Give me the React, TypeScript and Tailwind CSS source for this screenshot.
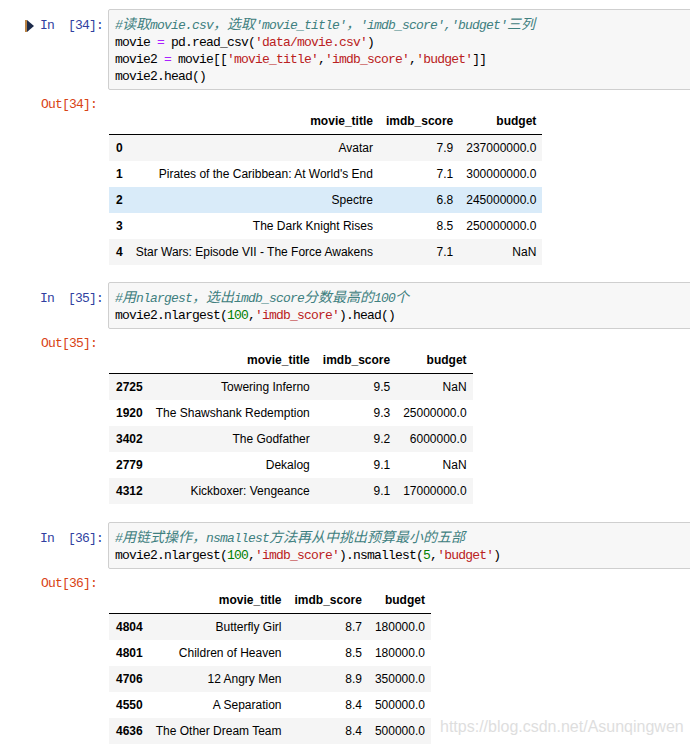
import React from "react";

type Row = [string, string, string, string];

const T1: Row[] = [
    ["0", "Avatar", "7.9", "237000000.0"],
    ["1", "Pirates of the Caribbean: At World's End", "7.1", "300000000.0"],
    ["2", "Spectre", "6.8", "245000000.0"],
    ["3", "The Dark Knight Rises", "8.5", "250000000.0"],
    ["4", "Star Wars: Episode VII - The Force Awakens", "7.1", "NaN"],
];

const T2: Row[] = [
    ["2725", "Towering Inferno", "9.5", "NaN"],
    ["1920", "The Shawshank Redemption", "9.3", "25000000.0"],
    ["3402", "The Godfather", "9.2", "6000000.0"],
    ["2779", "Dekalog", "9.1", "NaN"],
    ["4312", "Kickboxer: Vengeance", "9.1", "17000000.0"],
];

const T3: Row[] = [
    ["4804", "Butterfly Girl", "8.7", "180000.0"],
    ["4801", "Children of Heaven", "8.5", "180000.0"],
    ["4706", "12 Angry Men", "8.9", "350000.0"],
    ["4550", "A Separation", "8.4", "500000.0"],
    ["4636", "The Other Dream Team", "8.4", "500000.0"],
];

// full-width glyphs get their own size so they take two mono cells
function Cjk({ children }: { children: React.ReactNode }) {
    return <span className="text-[14px] tracking-normal">{children}</span>;
}

const S = ({ children }: { children: React.ReactNode }) => <span className="text-[#ba2121]">{children}</span>;
const N = ({ children }: { children: React.ReactNode }) => <span className="text-[#008000]">{children}</span>;
const Op = ({ children }: { children: React.ReactNode }) => <span className="text-[#aa22ff]">{children}</span>;

function Comment({ children }: { children: React.ReactNode }) {
    return <div className="italic text-[#408080]">{children}</div>;
}

function RunMarker() {
    return (
        <svg width="10" height="12" viewBox="0 0 10 12" className="mr-[5px] shrink-0">
            <rect x="0" y="0" width="2" height="12" fill="#b98244" />
            <path d="M2 0 L9 6 L2 12 Z" fill="#1d2b4a" />
        </svg>
    );
}

function InputCell({ n, marker, children }: { n: number; marker?: boolean; children: React.ReactNode }) {
    return (
        <div className="flex">
            <div className={`w-[108px] shrink-0 flex items-center h-[17px] mt-[8px] ${marker ? "pl-[25px]" : "pl-[40px]"}`}>
                {marker && <RunMarker />}
                <span className="whitespace-pre text-[#303f9f]">{`In  [${n}]:`}</span>
            </div>
            <div className="w-[620px] shrink-0 bg-[#f7f7f7] border border-[#cfcfcf] rounded-[2px] pt-[7px] pb-[4px] pl-[6px] whitespace-pre text-black">
                {children}
            </div>
        </div>
    );
}

function DataTable({ rows, highlight }: { rows: Row[]; highlight?: number }) {
    return (
        <table className="border-collapse font-['Liberation_Sans',Arial,sans-serif] text-[12px] leading-[14px] text-black tracking-normal mt-[12px]">
            <thead>
                <tr className="border-b border-black">
                    <th className="pl-[7px] pr-[6px] py-[6px]"></th>
                    <th className="pl-[7px] pr-[6px] py-[6px] text-right font-bold">movie_title</th>
                    <th className="pl-[7px] pr-[6px] py-[6px] text-right font-bold">imdb_score</th>
                    <th className="pl-[7px] pr-[6px] py-[6px] text-right font-bold">budget</th>
                </tr>
            </thead>
            <tbody>
                {rows.map((r, i) => (
                    <tr key={r[0]} className={i === highlight ? "bg-[#d9ebf9]" : i % 2 === 0 ? "bg-[#f5f5f5]" : "bg-white"}>
                        <th className="pl-[7px] pr-[6px] py-[6px] text-left font-bold whitespace-nowrap">{r[0]}</th>
                        <td className="pl-[7px] pr-[6px] py-[6px] text-right whitespace-nowrap">{r[1]}</td>
                        <td className="pl-[7px] pr-[6px] py-[6px] text-right whitespace-nowrap">{r[2]}</td>
                        <td className="pl-[7px] pr-[6px] py-[6px] text-right whitespace-nowrap">{r[3]}</td>
                    </tr>
                ))}
            </tbody>
        </table>
    );
}

function OutputCell({ n, children }: { n: number; children: React.ReactNode }) {
    return (
        <div className="flex mt-[6px]">
            <div className="w-[109px] shrink-0 pl-[41px] h-[17px] text-[#d84315] whitespace-pre">{`Out[${n}]:`}</div>
            <div>{children}</div>
        </div>
    );
}

export default function App() {
    return (
        <div className="relative w-[690px] h-[751px] overflow-hidden bg-white pt-[9px] font-['Liberation_Mono','Noto_Sans_CJK_SC',monospace] text-[13px] leading-[17px] tracking-[-0.8px]">
            <InputCell n={34} marker>
                <Comment>#<Cjk>读取</Cjk>movie.csv<Cjk>，选取</Cjk>'movie_title'<Cjk>，</Cjk>'imdb_score','budget'<Cjk>三列</Cjk></Comment>
                <div>movie <Op>=</Op> pd.read_csv(<S>'data/movie.csv'</S>)</div>
                <div>movie2 <Op>=</Op> movie[[<S>'movie_title'</S>,<S>'imdb_score'</S>,<S>'budget'</S>]]</div>
                <div>movie2.head()</div>
            </InputCell>
            <OutputCell n={34}>
                <DataTable rows={T1} highlight={2} />
            </OutputCell>

            <div className="mt-[17px]">
                <InputCell n={35}>
                    <Comment>#<Cjk>用</Cjk>nlargest<Cjk>，选出</Cjk>imdb_score<Cjk>分数最高的</Cjk>100<Cjk>个</Cjk></Comment>
                    <div>movie2.nlargest(<N>100</N>,<S>'imdb_score'</S>).head()</div>
                </InputCell>
            </div>
            <OutputCell n={35}>
                <DataTable rows={T2} />
            </OutputCell>

            <div className="mt-[18px]">
                <InputCell n={36}>
                    <Comment>#<Cjk>用链式操作，</Cjk>nsmallest<Cjk>方法再从中挑出预算最小的五部</Cjk></Comment>
                    <div>movie2.nlargest(<N>100</N>,<S>'imdb_score'</S>).nsmallest(<N>5</N>,<S>'budget'</S>)</div>
                </InputCell>
            </div>
            <OutputCell n={36}>
                <DataTable rows={T3} />
            </OutputCell>

            <div className="absolute left-[440px] top-[718px] font-['Liberation_Sans',Arial,sans-serif] text-[16px] leading-[18px] tracking-normal text-[#dedede]">
                https://blog.csdn.net/Asunqingwen
            </div>
        </div>
    );
}
